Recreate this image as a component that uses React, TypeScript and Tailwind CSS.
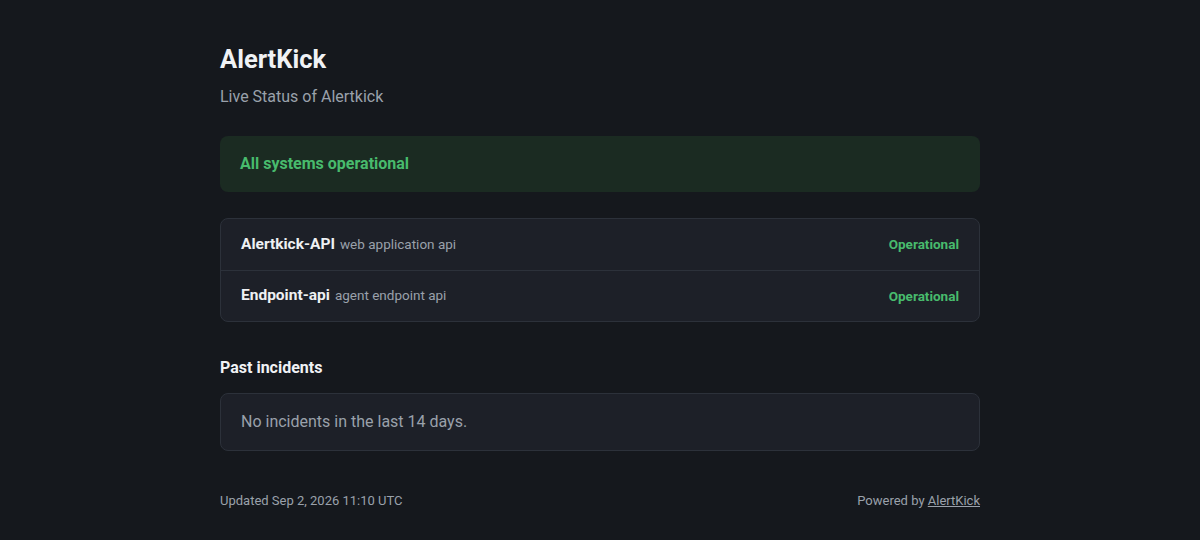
export default function App() {
  return (
    <div className="min-h-[540px] w-full bg-[#15181d] text-[#e6e8eb]" style={{ fontFamily: "Roboto, 'Liberation Sans', sans-serif" }}>
      <div className="mx-auto w-[760px] pt-[43px] pb-8">
        <h1 className="text-[25.5px] leading-[32px] font-bold text-[#f0f2f5]">AlertKick</h1>
        <p className="mt-[10px] text-[16px] leading-[24px] text-[#9aa1ab]">Live Status of Alertkick</p>
        <div className="mt-[27px] h-[56px] rounded-lg bg-[#1b2b22] px-5 flex items-center">
          <span className="text-[16px] font-bold text-[#48bb6d]">All systems operational</span>
        </div>
        <div className="mt-[26px] rounded-lg border border-[#2c313a] bg-[#1d2028]">
          {[
            ["Alertkick-API", "web application api"],
            ["Endpoint-api", "agent endpoint api"],
          ].map(([n, d], i) => (
            <div key={n} className={`flex items-center justify-between h-[51px] px-5 ${i > 0 ? "border-t border-[#2c313a]" : ""}`}>
              <div className="flex items-baseline gap-[5px]">
                <span className="text-[15.5px] font-bold text-[#eef0f3]">{n}</span>
                <span className="text-[13.5px] text-[#9aa1ab]">{d}</span>
              </div>
              <span className="text-[13.5px] font-bold text-[#48bb6d]">Operational</span>
            </div>
          ))}
        </div>
        <h2 className="mt-[34px] text-[16px] leading-[24px] font-bold text-[#f0f2f5]">Past incidents</h2>
        <div className="mt-[13px] h-[58px] rounded-lg border border-[#2c313a] bg-[#1d2028] px-5 flex items-center">
          <span className="text-[16px] text-[#9aa1ab]">No incidents in the last 14 days.</span>
        </div>
        <div className="mt-[40px] flex justify-between text-[13px] text-[#9aa1ab]">
          <span>Updated Sep 2, 2026 11:10 UTC</span>
          <span>Powered by <a className="underline">AlertKick</a></span>
        </div>
      </div>
    </div>
  );
}
